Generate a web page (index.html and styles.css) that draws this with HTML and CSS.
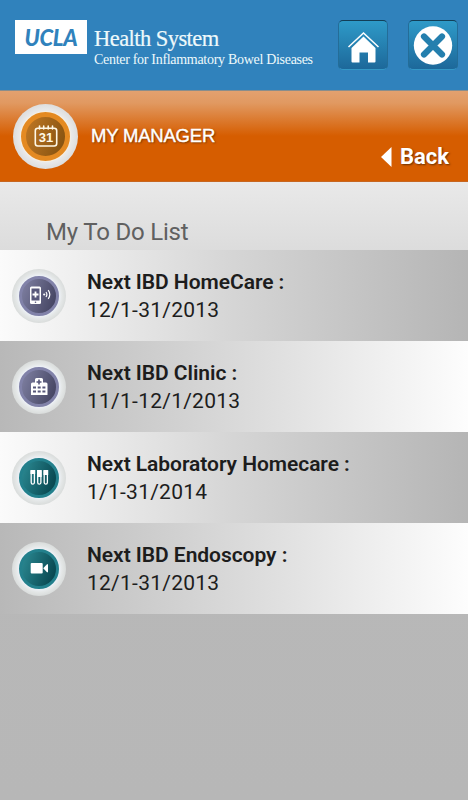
FILE: index.html
```html
<!DOCTYPE html>
<html lang="en">
<head>
<meta charset="UTF-8">
<meta name="viewport" content="width=device-width, initial-scale=1.0">
<title>My Manager</title>
<link rel="stylesheet" href="styles.css">
</head>
<body>
  <header class="header">
    <div class="logo">UCLA</div>
    <div class="brand">
      <div class="brand-name">Health System</div>
      <div class="brand-center">Center for Inflammatory Bowel Diseases</div>
    </div>
    <div class="header-buttons">
      <button class="header-btn" aria-label="Home">
        <svg width="48" height="48" viewBox="0 0 48 48">
          <path d="M9.5 26 24.5 12 39.5 26" fill="none" stroke="#fff" stroke-width="1.5"/>
          <path d="M24.500 15.500 12.500 27V40.500Q12.500 41.500 13.500 41.500H20.500V31.500H29V41.500H35.500Q36.500 41.500 36.500 40.500V27z" fill="#fff"/>
        </svg>
      </button>
      <button class="header-btn" aria-label="Close">
        <svg width="48" height="48" viewBox="0 0 48 48">
          <circle cx="24" cy="24.500" r="19.200" fill="#fff"/>
          <path d="M15 15.500 33 33.500M33 15.500 15 33.500" stroke="#247fae" stroke-width="6.200" stroke-linecap="round"/>
        </svg>
      </button>
    </div>
  </header>

  <section class="title-bar">
    <div class="badge badge-large orange">
      <svg width="26" height="24" viewBox="0 0 26 24" fill="none" stroke="#fff8e6" stroke-width="1.600" stroke-linecap="round">
        <rect x="2.300" y="4.300" width="21.400" height="17.700" rx="2.500"/>
        <path d="M6.500 2v3M10.700 2v3M15.200 2v3M19.500 2v3"/>
        <text class="calendar-day" x="13" y="17.600" text-anchor="middle" textLength="14.500" lengthAdjust="spacingAndGlyphs">31</text>
      </svg>
    </div>
    <h1>MY MANAGER</h1>
    <a class="back" href="#">
      <svg width="11" height="20" viewBox="0 0 11 20"><path d="M0 10 10.500 0V20z" fill="#fff"/></svg>
      <span>Back</span>
    </a>
  </section>

  <main>
    <h2>My To Do List</h2>
    <ul class="todo-list">
      <li>
        <div class="badge purple">
          <svg width="24" height="20" viewBox="0 0 24 20">
            <rect x="3" y="0.500" width="11" height="17.500" rx="1.500" fill="#fff"/>
            <rect x="4.500" y="2.500" width="8" height="12" fill="#57577a"/>
            <path d="M8.500 5.500v6M5.500 8.500h6" stroke="#fff" stroke-width="1.800"/>
            <circle cx="8.500" cy="16.300" r="0.800" fill="#57577a"/>
            <circle cx="17.200" cy="8.500" r="1.100" fill="#fff"/>
            <path d="M19 6q1.800 2.500 0 5M21.200 4.200q3.200 4.300 0 8.600" fill="none" stroke="#fff" stroke-width="1.200"/>
          </svg>
        </div>
        <div class="todo-text">
          <h3>Next IBD HomeCare :</h3>
          <p>12/1-31/2013</p>
        </div>
      </li>
      <li>
        <div class="badge purple">
          <svg width="24" height="20" viewBox="0 0 24 20">
            <path d="M4 18V7Q4 5.500 5.500 5.500H8V2.500Q8 1 9.500 1H14.500Q16 1 16 2.500V5.500H19Q20.500 5.500 20.500 7V18z" fill="#fff"/>
            <path d="M12 2.500v5M9.500 5h5" stroke="#57577a" stroke-width="1.600"/>
            <path d="M6 9.500h3v2H6zM10.700 9.500h3v2h-3zM15.400 9.500h3v2h-3zM6 13.500h3v2H6zM10.700 13.500h3v2h-3zM15.400 13.500h3v2h-3z" fill="#57577a"/>
          </svg>
        </div>
        <div class="todo-text">
          <h3>Next IBD Clinic :</h3>
          <p>11/1-12/1/2013</p>
        </div>
      </li>
      <li>
        <div class="badge teal">
          <svg width="24" height="20" viewBox="0 0 24 20">
            <path d="M4.200 2.500V14.500a1.600 1.600 0 0 0 3.200 0V2.500M10.700 2.500V14.500a1.600 1.600 0 0 0 3.200 0V2.500M17.200 2.500V14.500a1.600 1.600 0 0 0 3.200 0V2.500" fill="none" stroke="#fff" stroke-width="1.300"/>
            <path d="M3.500 2h4.700v4H3.500zM10 2h4.700v7H10zM16.500 2h4.700v5h-4.700z" fill="#fff"/>
          </svg>
        </div>
        <div class="todo-text">
          <h3>Next Laboratory Homecare :</h3>
          <p>1/1-31/2014</p>
        </div>
      </li>
      <li>
        <div class="badge teal">
          <svg width="24" height="20" viewBox="0 0 24 20">
            <rect x="3.700" y="4" width="12" height="10.400" rx="1" fill="#fff"/>
            <path d="M16.200 9.200 20 5.200H21V13.200H20z" fill="#fff"/>
          </svg>
        </div>
        <div class="todo-text">
          <h3>Next IBD Endoscopy :</h3>
          <p>12/1-31/2013</p>
        </div>
      </li>
    </ul>
  </main>
</body>
</html>
```
FILE: styles.css
```css
* {
  box-sizing: border-box;
  margin: 0;
  padding: 0;
}

body {
  min-height: 800px;
  font-family: Roboto, "Liberation Sans", sans-serif;
  background: #b7b7b7;
}

.header {
  display: flex;
  align-items: flex-start;
  height: 91px;
  padding: 20px 10px 0 15px;
  background: #3082bc;
  border-bottom: 1px solid #8a8d8b;
}

.logo {
  width: 72px;
  height: 34px;
  background: #fff;
  color: #3082bc;
  font: italic 900 22px/35px Lato, sans-serif;
  letter-spacing: -0.3px;
  text-align: center;
}

.brand {
  margin-left: 7px;
  color: #eef9fb;
  font-family: "Liberation Serif", serif;
  white-space: nowrap;
}

.brand-name {
  height: 28px;
  font-size: 22.5px;
  line-height: 37px;
  letter-spacing: -0.55px;
  -webkit-text-stroke: 0.2px #eef9fb;
}

.brand-center {
  font-size: 14px;
  line-height: 23px;
  letter-spacing: -0.3px;
}

.header-buttons {
  display: flex;
  gap: 20px;
  margin-left: auto;
}

.header-btn {
  width: 50px;
  height: 50px;
  border: 1px solid;
  border-color: #123f57 #246d98 #3498c6 #246d98;
  border-radius: 5px;
  background: linear-gradient(#2e9ac8, #1d689a);
}

.header-btn svg {
  display: block;
}

.title-bar {
  display: flex;
  align-items: center;
  height: 91px;
  padding: 0 19px 0 13px;
  background: linear-gradient(#e3a16f 0, #e19961 12px, #d65d00 45px, #d65d00);
  border-bottom: 1px solid #c76620;
  color: #fff;
}

.title-bar h1 {
  margin-left: 13px;
  font: 18.5px/24px "Liberation Sans", sans-serif;
  letter-spacing: -0.2px;
  -webkit-text-stroke: 0.4px #fff;
  text-shadow: 1px 1px 2px #6b3000;
}

.back {
  display: flex;
  align-items: center;
  gap: 8px;
  margin: 42px 0 0 auto;
  color: #fff;
  font-size: 22px;
  font-weight: bold;
  line-height: 26px;
  text-decoration: none;
  text-shadow: 1px 1px 2px #6b3000;
}

/* Round icon badges */
.badge {
  display: flex;
  align-items: center;
  justify-content: center;
  flex: none;
  width: 54px;
  height: 54px;
  border-radius: 50%;
  background: radial-gradient(circle, #edf1f7 0 20px, #e4e7e7 23px, #d9dcdb 27px);
  position: relative;
}

.badge::before {
  content: "";
  position: absolute;
  inset: 7px;
  border: 3px solid;
  border-radius: 50%;
}

.badge svg {
  position: relative;
}

.badge-large {
  width: 65px;
  height: 65px;
  background: radial-gradient(circle, #fff3df 0 24px, #e9e9e9 26px, #dedede 32px);
}

.badge-large::before {
  inset: 8px;
  border-width: 5px;
}

.orange::before {
  border-color: #e48a22;
  background: linear-gradient(110deg, #c07824, #82500f);
}

.purple::before {
  border-color: #8182a9;
  background: linear-gradient(110deg, #8081a3, #3f3f5c);
}

.teal::before {
  border-color: #23808c;
  background: linear-gradient(110deg, #2c8b94, #043f48);
}

.calendar-day {
  fill: #fff8e6;
  stroke: none;
  font: bold 12px "Liberation Sans", sans-serif;
}

main {
  height: 618px;
  background: linear-gradient(#e9e9e9, #dcdcdc 68px, #b8b8b8 360px, #b7b7b7);
}

main h2 {
  height: 68px;
  padding: 35px 0 0 46px;
  color: #606060;
  font-size: 24px;
  font-weight: normal;
  line-height: 31px;
  letter-spacing: -0.2px;
}

.todo-list {
  list-style: none;
}

.todo-list li {
  display: flex;
  align-items: center;
  height: 91px;
  padding-left: 12px;
  background: linear-gradient(90deg, #fbfbfb, #d5d5d5 50%, #b5b5b5);
}

.todo-list li:nth-child(even) {
  background: linear-gradient(90deg, #b8b8b8, #d9d9d9 50%, #fdfdfd);
}

.todo-text {
  margin: 1px 0 0 21px;
  color: #1d1d1d;
  font-size: 21px;
  line-height: 28px;
}

.todo-text h3 {
  font-size: 21px;
  font-weight: 600;
  letter-spacing: -0.05px;
}

.todo-text p {
  letter-spacing: 0.25px;
}
```
